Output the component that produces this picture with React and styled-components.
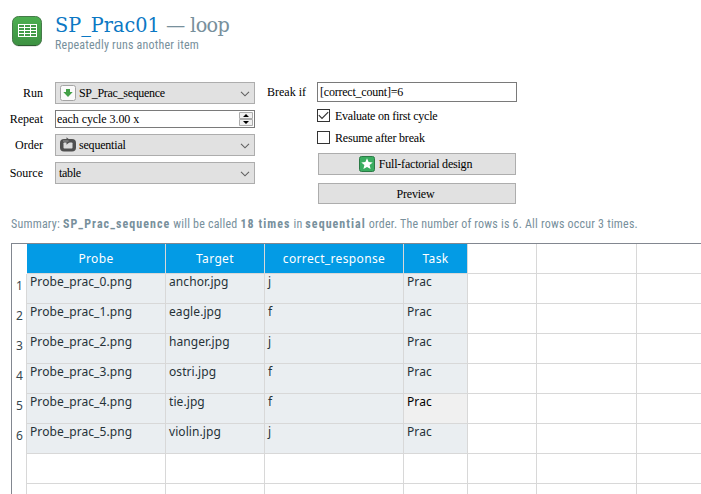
import React from 'react';
import styled, { createGlobalStyle } from 'styled-components';

const Global = createGlobalStyle`
  * { box-sizing: border-box; }
  body { margin: 0; background: #fff; overflow: hidden; }
`;

const Window = styled.main`
  width: 701px;
  height: 494px;
  overflow: hidden;
  display: flex;
  flex-direction: column;
  background: #fff;
`;

const Header = styled.header`
  display: flex;
  flex: none;
  height: 82px;
  padding: 12px 0 0 11px;
  gap: 12px;
`;

const HeaderIcon = styled.svg`
  width: 32px;
  height: 36px;
  margin-top: 3px;
  flex: none;
`;

const Titles = styled.div`
  display: flex;
  flex-direction: column;
`;

const Title = styled.h1`
  margin: 0;
  height: 26px;
  font: 400 21px/26px 'Roboto Slab', 'DejaVu Serif Condensed', 'DejaVu Serif', serif;
  color: #0b78c4;
  white-space: pre;
  transform: scaleX(1.02);
  transform-origin: 0 0;
`;

const Kind = styled.span`
  color: #78909c;
  letter-spacing: -0.6px;
`;

const Note = styled.p`
  margin: 0;
  width: max-content;
  height: 14px;
  font: 400 12px/14px 'Roboto Condensed', Roboto, sans-serif;
  letter-spacing: 0.2px;
  color: #78909c;
  white-space: pre;

  b { font-weight: 700; letter-spacing: 1.04px; }
`;

const Controls = styled.section`
  display: flex;
  flex: none;
  height: 135px;
`;

const FormColumn = styled.div`
  width: 255px;
  display: grid;
  grid-template-columns: 43px 200px;
  grid-template-rows: 22px 18px 22px 22px;
  column-gap: 12px;
  row-gap: 6px;
  align-content: start;
`;

const Label = styled.label`
  font: 400 12px/22px 'Liberation Serif', serif;
  color: #000;
  text-align: right;
  white-space: pre;
  align-self: center;
`;

const Text = styled.span`
  font: 400 12px/16px 'Liberation Serif', serif;
  letter-spacing: ${(p) => p.$track || 0}px;
  color: #000;
  white-space: pre;
`;

const Combo = styled.div`
  height: 22px;
  display: flex;
  align-items: center;
  gap: 3px;
  padding: 0 4px 0 ${(p) => (p.$icon ? 4 : 3)}px;
  background: #e1e1e1;
  border: 1px solid #adadad;
`;

const Spin = styled.div`
  height: 18px;
  display: flex;
  align-items: center;
  padding: 0 1px;
  border: 1px solid #7a7a7a;
  background: #fff;
`;

const Grow = styled.div`
  flex: 1;
`;

const Arrows = styled.svg`
  width: 14px;
  height: 14px;
  flex: none;
`;

const Icon = styled.svg`
  width: 16px;
  height: 16px;
  flex: none;
`;

const Chevron = styled.svg`
  width: 10px;
  height: 6px;
  flex: none;
  margin-top: 1px;
`;

const BreakColumn = styled.div`
  margin-left: 12px;
  display: grid;
  grid-template-columns: 38px 200px;
  grid-template-rows: 20px 13px 13px 22px 21px;
  column-gap: 12px;
  align-content: start;

  & > *:nth-child(n + 3) { grid-column: 2; }
`;

const Input = styled.div`
  height: 20px;
  display: flex;
  align-items: center;
  padding: 0 2px;
  border: 1px solid #7a7a7a;
`;

const CheckRow = styled.div`
  height: 13px;
  margin-top: ${(p) => p.$top}px;
  display: flex;
  align-items: center;
  gap: 5px;
`;

const Box = styled.svg`
  width: 13px;
  height: 13px;
  flex: none;
`;

const Button = styled.button`
  height: ${(p) => p.$height}px;
  width: 198px;
  margin: ${(p) => p.$top}px 0 0 1px;
  padding: 0 3px 0 0;
  display: flex;
  align-items: center;
  justify-content: center;
  gap: 4px;
  background: #e1e1e1;
  border: 1px solid #adadad;
`;

const Summary = styled.div`
  flex: none;
  height: 26px;
  padding-left: 11px;
`;

const Sheet = styled.section`
  flex: 1;
  margin-left: 11px;
  border: solid #828790;
  border-width: 1px 0 0 1px;
  display: grid;
  grid-template-columns: 15px 139px 99px 139px 64px 69px 100px 65px;
  grid-auto-rows: 30px;
  overflow: hidden;
`;

const Cell = styled.div`
  border: solid #d8d8d8;
  border-width: 0 1px 1px 0;
  padding-left: 3px;
  background: ${(p) => (p.$current ? '#f0f0f0' : p.$filled ? '#eaeef1' : '#fff')};
  color: ${(p) => (p.$current ? '#000' : '#263238')};
  font: 400 12px/16px 'Noto Sans', sans-serif;
  letter-spacing: 0.08px;
  white-space: pre;
`;

const ColumnHead = styled(Cell)`
  background: ${(p) => (p.$filled ? '#039be5' : '#fff')};
  color: #fff;
  padding: 0;
  text-align: center;
  line-height: 29px;
  letter-spacing: 0.35px;
`;

const RowHead = styled.div`
  border-right: 1px solid #d8d8d8;
  padding-left: 1px;
  color: #37474f;
  font: 400 12px/24px 'Noto Sans', sans-serif;
  text-align: center;
`;

const Corner = styled.div`
  background: #fff;
`;

const HEADS = ['Probe', 'Target', 'correct_response', 'Task', '', '', ''];
const ROWS = [
  ['Probe_prac_0.png', 'anchor.jpg', 'j', 'Prac'],
  ['Probe_prac_1.png', 'eagle.jpg', 'f', 'Prac'],
  ['Probe_prac_2.png', 'hanger.jpg', 'j', 'Prac'],
  ['Probe_prac_3.png', 'ostri.jpg', 'f', 'Prac'],
  ['Probe_prac_4.png', 'tie.jpg', 'f', 'Prac'],
  ['Probe_prac_5.png', 'violin.jpg', 'j', 'Prac'],
  [],
  [],
];

function LoopTableIcon() {
  return (
    <HeaderIcon viewBox="0 0 32 36">
      <defs>
        <linearGradient id="green" x1="0" y1="0" x2="0" y2="1">
          <stop offset="0" stopColor="#4caf50" />
          <stop offset="1" stopColor="#3d9142" />
        </linearGradient>
      </defs>
      <rect x="1.5" y="2.5" width="29" height="29" rx="6" fill="#c9c9c9" />
      <rect x="1.5" y="1.5" width="29" height="29" rx="6" fill="url(#green)" stroke="#457a49" />
      <path d="M7 30.5h18" stroke="#2c5a30" />
      <rect x="7" y="9" width="19" height="13" fill="#fff" />
      <g fill="#419a47">
        {[10, 13, 16, 19].map((y) =>
          [8, 14, 20].map((x) => <rect key={`${x}-${y}`} x={x} y={y} width="5" height="2" />)
        )}
      </g>
    </HeaderIcon>
  );
}

function SequenceIcon() {
  return (
    <Icon viewBox="0 0 16 16">
      <rect x=".5" y=".5" width="15" height="15" rx="2" fill="#fafafa" stroke="#a4a4a4" />
      <path d="M6 4h4v3h2.7L8 12 3.3 7H6z" fill="#43a047" />
    </Icon>
  );
}

function RepeatIcon() {
  return (
    <Icon viewBox="0 0 16 16">
      <rect x="0" y="2" width="16" height="12.5" rx="4" fill="#505050" />
      <rect x="3.5" y="5.5" width="9" height="6" rx=".8" fill="#dcdcdc" />
      <path d="M6.5 .2L11 4 6.5 7.8z" fill="#505050" />
      <path d="M3 4h5.5" stroke="#989898" strokeWidth="1" />
    </Icon>
  );
}

function StarIcon() {
  return (
    <Icon viewBox="0 0 16 16">
      <rect x=".5" y=".5" width="15" height="15" rx="2" fill="#3aad60" stroke="#2b7a46" />
      <path d="M8 2.3l1.6 3.8 4.1.3-3.1 2.7 1 4L8 10.9l-3.6 2.2 1-4-3.1-2.7 4.1-.3z" fill="#fff" />
    </Icon>
  );
}

function ComboBox({ icon, text, track }) {
  return (
    <Combo $icon={Boolean(icon)}>
      {icon}
      <Text $track={track}>{text}</Text>
      <Grow />
      <Chevron viewBox="0 0 10 6">
        <path d="M1 .8l4 4 4-4" fill="none" stroke="#606060" strokeWidth="1.1" />
      </Chevron>
    </Combo>
  );
}

function CheckBox({ checked }) {
  return (
    <Box viewBox="0 0 13 13">
      <rect x=".5" y=".5" width="12" height="12" fill="#fff" stroke="#333" />
      {checked && <path d="M1.8 6.2l3.2 3.2 6.2-6.2" fill="none" stroke="#333" strokeWidth="1.2" />}
    </Box>
  );
}

export default function App() {
  return (
    <Window>
      <Global />
      <Header>
        <LoopTableIcon />
        <Titles>
          <Title>
            SP_Prac01 <Kind>— loop</Kind>
          </Title>
          <Note>Repeatedly runs another item</Note>
        </Titles>
      </Header>
      <Controls>
        <FormColumn>
          <Label>Run</Label>
          <ComboBox icon={<SequenceIcon />} text="SP_Prac_sequence" track={-0.3} />
          <Label>Repeat</Label>
          <Spin>
            <Text $track={-0.07}>each cycle 3.00 x</Text>
            <Grow />
            <Arrows viewBox="0 0 14 14">
              <path d="M.5 .5h13v6H.5zM.5 7.5h13v6H.5z" fill="#f0f0f0" stroke="#acacac" />
              <path d="M4 5l3-3 3 3zM4 9l3 3 3-3z" fill="#000" />
            </Arrows>
          </Spin>
          <Label>Order</Label>
          <ComboBox icon={<RepeatIcon />} text="sequential" track={-0.2} />
          <Label>Source</Label>
          <ComboBox text="table" track={-0.3} />
        </FormColumn>
        <BreakColumn>
          <Label>Break if</Label>
          <Input><Text $track={-0.22}>[correct_count]=6</Text></Input>
          <CheckRow $top={7}><CheckBox checked /><Text $track={-0.23}>Evaluate on first cycle</Text></CheckRow>
          <CheckRow $top={16}><CheckBox /><Text $track={-0.2}>Resume after break</Text></CheckRow>
          <Button $height={22} $top={25}><StarIcon /><Text $track={-0.2}>Full-factorial design</Text></Button>
          <Button $height={21} $top={33}><Text $track={-0.2}>Preview</Text></Button>
        </BreakColumn>
      </Controls>
      <Summary>
        <Note>
          Summary: <b>SP_Prac_sequence</b> will be called <b>18 times</b> in <b>sequential</b> order. The number of rows is 6. All rows occur 3 times.
        </Note>
      </Summary>
      <Sheet>
        <Corner />
        {HEADS.map((h, i) => <ColumnHead key={i} $filled={i < 4}>{h}</ColumnHead>)}
        {ROWS.map((row, r) => (
          <React.Fragment key={r}>
            <RowHead>{row.length ? r + 1 : ''}</RowHead>
            {HEADS.map((_, c) => (
              <Cell key={c} $filled={Boolean(row[c])} $current={r === 4 && c === 3}>{row[c]}</Cell>
            ))}
          </React.Fragment>
        ))}
      </Sheet>
    </Window>
  );
}
